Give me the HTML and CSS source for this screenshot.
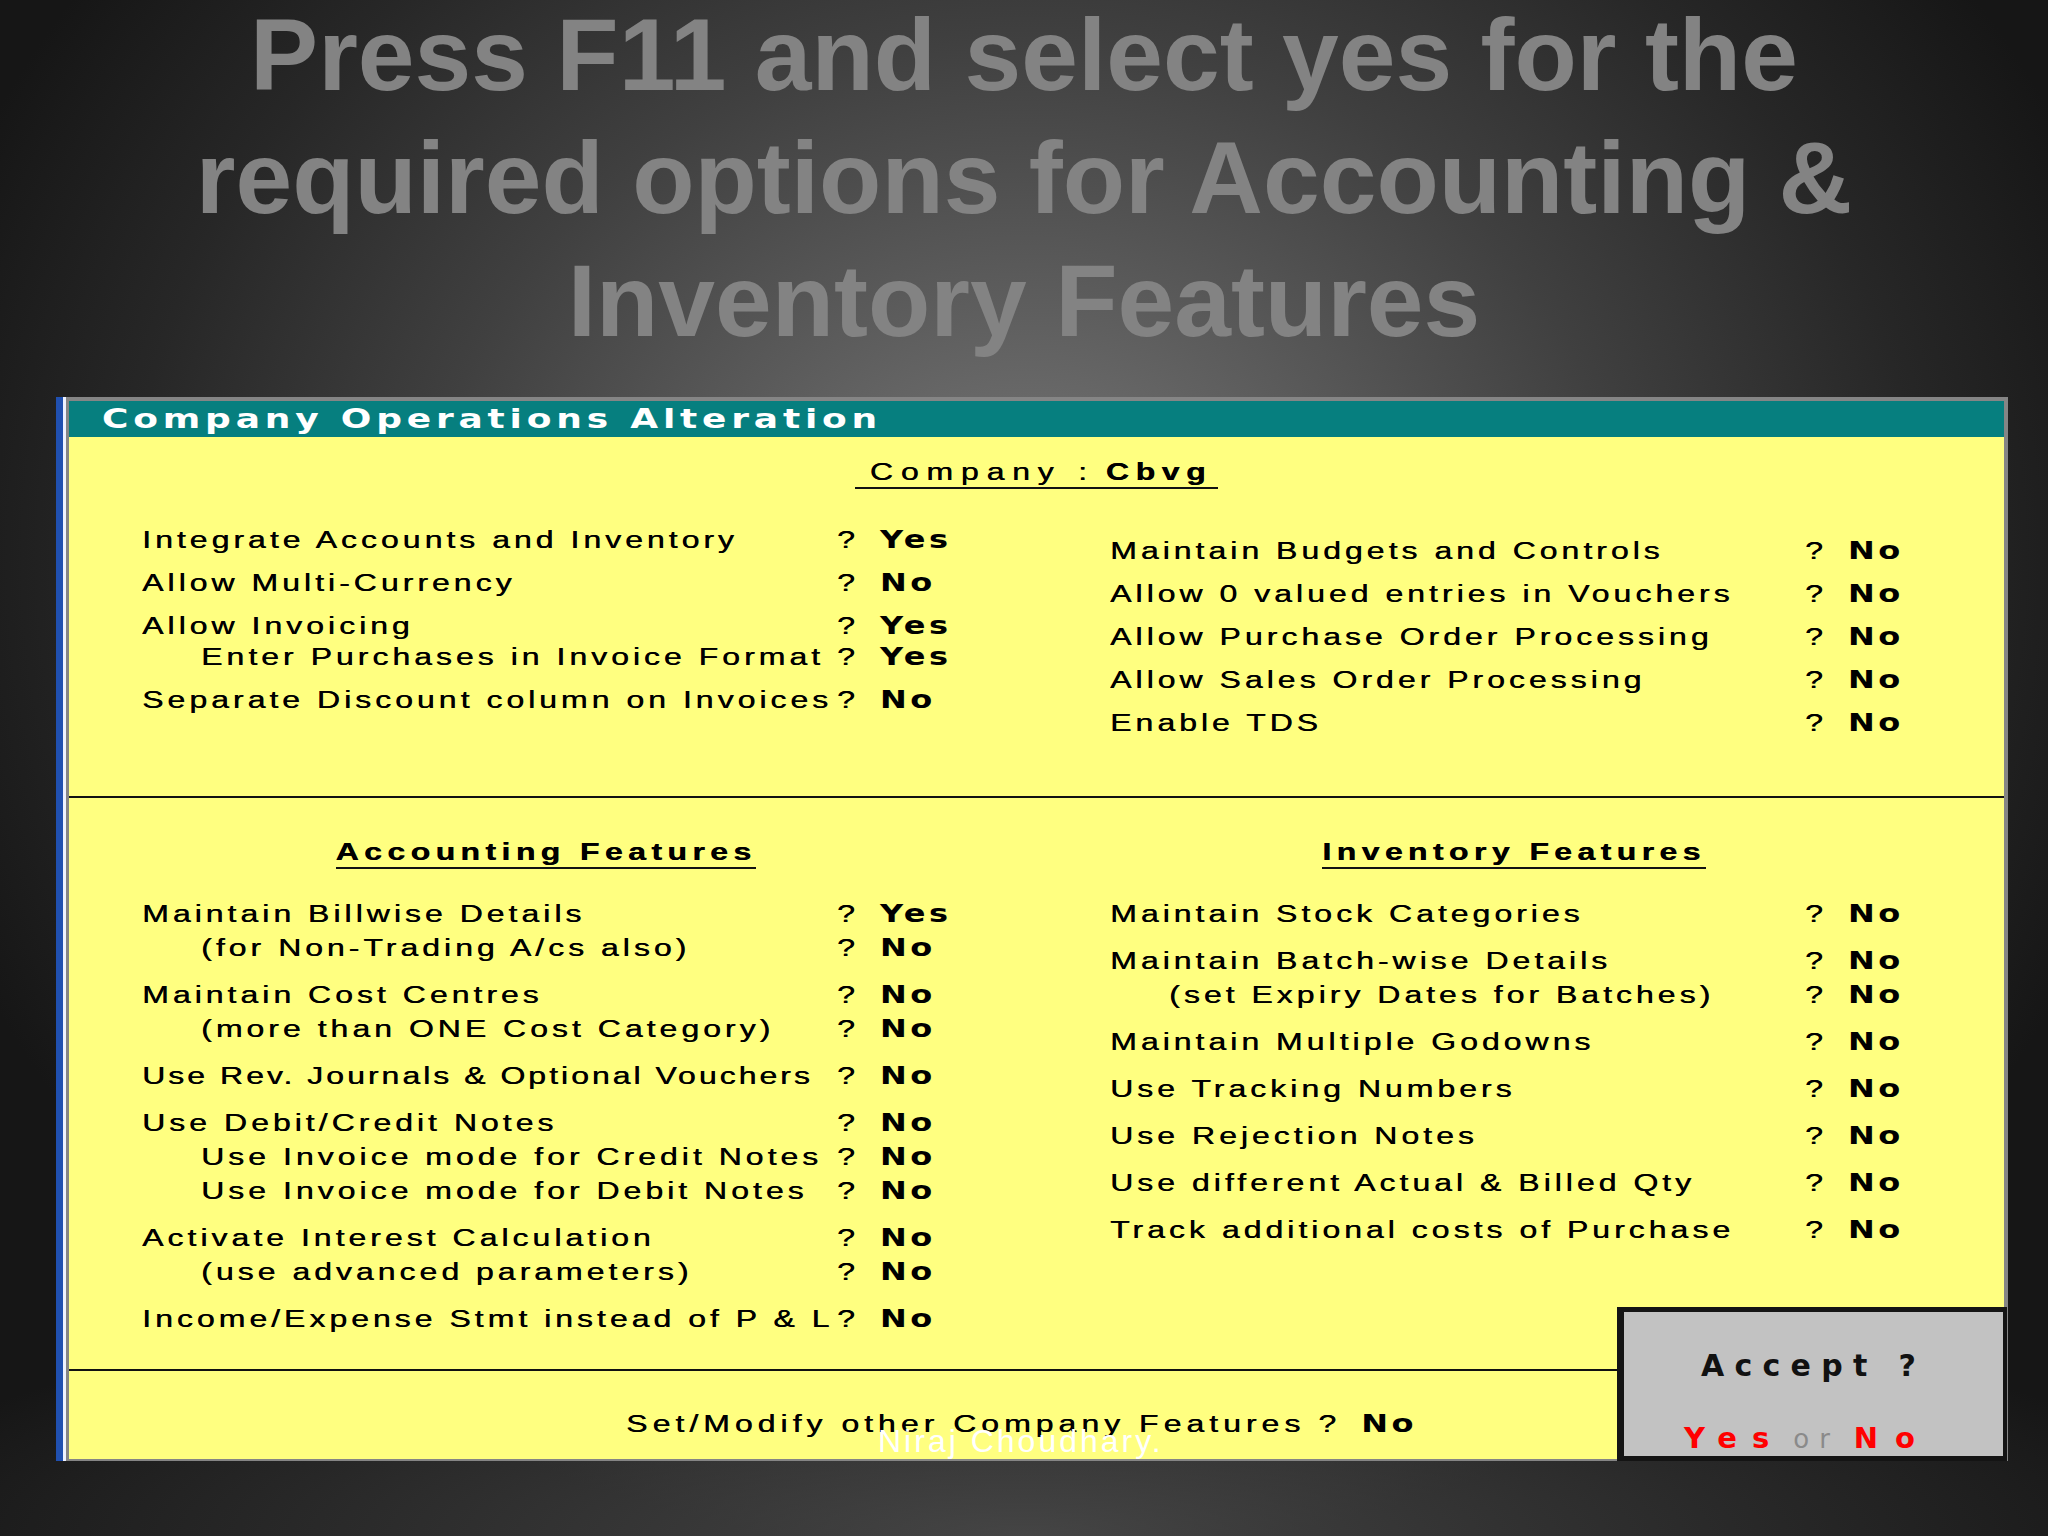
FILE: index.html
```html
<!DOCTYPE html>
<html lang="en">
<head>
    <meta charset="UTF-8">
    <meta name="viewport" content="width=device-width, initial-scale=1.0">
    <title>Company Operations Alteration</title>
    <link rel="stylesheet" href="styles.css">
</head>
<body>

    <h1 class="slide-title">Press F11 and select yes for the<br>required options for Accounting &amp;<br>Inventory Features</h1>

    <div class="window">
        <div class="frame">
            <div class="panel">
                <div class="panel-head"><span class="sq">Company Operations Alteration</span></div>

                <div class="company">
                    <span class="company-line"><span class="sq">Company :</span><b class="sq">Cbvg</b></span>
                </div>

                <!-- General options -->
                <div class="cols top-opts">
                    <div class="opt-list">
                        <div class="grp">
                            <div class="opt"><span class="lbl">Integrate Accounts and Inventory</span><span class="q">?</span><span class="val">Yes</span></div>
                        </div>
                        <div class="grp">
                            <div class="opt"><span class="lbl">Allow Multi-Currency</span><span class="q">?</span><span class="val">No</span></div>
                        </div>
                        <div class="grp">
                            <div class="opt"><span class="lbl">Allow Invoicing</span><span class="q">?</span><span class="val">Yes</span></div>
                            <div class="opt sub"><span class="lbl">Enter Purchases in Invoice Format</span><span class="q">?</span><span class="val">Yes</span></div>
                        </div>
                        <div class="grp">
                            <div class="opt"><span class="lbl">Separate Discount column on Invoices</span><span class="q">?</span><span class="val">No</span></div>
                        </div>
                    </div>

                    <div class="opt-list shift">
                        <div class="grp">
                            <div class="opt"><span class="lbl">Maintain Budgets and Controls</span><span class="q">?</span><span class="val">No</span></div>
                        </div>
                        <div class="grp">
                            <div class="opt"><span class="lbl">Allow 0 valued entries in Vouchers</span><span class="q">?</span><span class="val">No</span></div>
                        </div>
                        <div class="grp">
                            <div class="opt"><span class="lbl">Allow Purchase Order Processing</span><span class="q">?</span><span class="val">No</span></div>
                        </div>
                        <div class="grp">
                            <div class="opt"><span class="lbl">Allow Sales Order Processing</span><span class="q">?</span><span class="val">No</span></div>
                        </div>
                        <div class="grp">
                            <div class="opt"><span class="lbl">Enable TDS</span><span class="q">?</span><span class="val">No</span></div>
                        </div>
                    </div>
                </div>

                <!-- Accounting / Inventory features -->
                <div class="cols features">
                    <div>
                        <div class="feat-title"><span><span class="sq">Accounting Features</span></span></div>
                        <div class="opt-list">
                            <div class="grp">
                                <div class="opt"><span class="lbl">Maintain Billwise Details</span><span class="q">?</span><span class="val">Yes</span></div>
                                <div class="opt sub"><span class="lbl">(for Non-Trading A/cs also)</span><span class="q">?</span><span class="val">No</span></div>
                            </div>
                            <div class="grp">
                                <div class="opt"><span class="lbl">Maintain Cost Centres</span><span class="q">?</span><span class="val">No</span></div>
                                <div class="opt sub"><span class="lbl">(more than ONE Cost Category)</span><span class="q">?</span><span class="val">No</span></div>
                            </div>
                            <div class="grp">
                                <div class="opt"><span class="lbl tight">Use Rev. Journals &amp; Optional Vouchers</span><span class="q">?</span><span class="val">No</span></div>
                            </div>
                            <div class="grp">
                                <div class="opt"><span class="lbl">Use Debit/Credit Notes</span><span class="q">?</span><span class="val">No</span></div>
                                <div class="opt sub"><span class="lbl">Use Invoice mode for Credit Notes</span><span class="q">?</span><span class="val">No</span></div>
                                <div class="opt sub"><span class="lbl">Use Invoice mode for Debit Notes</span><span class="q">?</span><span class="val">No</span></div>
                            </div>
                            <div class="grp">
                                <div class="opt"><span class="lbl">Activate Interest Calculation</span><span class="q">?</span><span class="val">No</span></div>
                                <div class="opt sub"><span class="lbl">(use advanced parameters)</span><span class="q">?</span><span class="val">No</span></div>
                            </div>
                            <div class="grp">
                                <div class="opt"><span class="lbl">Income/Expense Stmt instead of P &amp; L</span><span class="q">?</span><span class="val">No</span></div>
                            </div>
                        </div>
                    </div>

                    <div>
                        <div class="feat-title"><span><span class="sq">Inventory Features</span></span></div>
                        <div class="opt-list">
                            <div class="grp">
                                <div class="opt"><span class="lbl">Maintain Stock Categories</span><span class="q">?</span><span class="val">No</span></div>
                            </div>
                            <div class="grp">
                                <div class="opt"><span class="lbl">Maintain Batch-wise Details</span><span class="q">?</span><span class="val">No</span></div>
                                <div class="opt sub"><span class="lbl">(set Expiry Dates for Batches)</span><span class="q">?</span><span class="val">No</span></div>
                            </div>
                            <div class="grp">
                                <div class="opt"><span class="lbl">Maintain Multiple Godowns</span><span class="q">?</span><span class="val">No</span></div>
                            </div>
                            <div class="grp">
                                <div class="opt"><span class="lbl">Use Tracking Numbers</span><span class="q">?</span><span class="val">No</span></div>
                            </div>
                            <div class="grp">
                                <div class="opt"><span class="lbl">Use Rejection Notes</span><span class="q">?</span><span class="val">No</span></div>
                            </div>
                            <div class="grp">
                                <div class="opt"><span class="lbl">Use different Actual &amp; Billed Qty</span><span class="q">?</span><span class="val">No</span></div>
                            </div>
                            <div class="grp">
                                <div class="opt"><span class="lbl">Track additional costs of Purchase</span><span class="q">?</span><span class="val">No</span></div>
                            </div>
                        </div>
                    </div>
                </div>

                <div class="bottom-bar">
                    <div class="bottom-text">
                        <span>Set/Modify other Company Features</span><span class="q">?</span><span class="val">No</span>
                    </div>
                </div>

                <!-- Accept dialog -->
                <div class="accept">
                    <div class="accept-q">Accept ?</div>
                    <div class="accept-yn"><span class="yes">Yes</span><span class="or">or</span><span class="no">No</span></div>
                </div>
            </div>
        </div>
    </div>

    <div class="watermark">Niraj Choudhary.</div>

</body>
</html>
```

FILE: styles.css
```css
body {
    position: relative;
    margin: 0;
    width: 2048px;
    height: 1536px;
    overflow: hidden;
    font-family: "Liberation Sans", Arial, sans-serif;
    background:
        radial-gradient(ellipse 1200px 260px at 50% 100%, rgba(80, 80, 80, 0.8), rgba(80, 80, 80, 0) 100%),
        radial-gradient(ellipse 1150px 1000px at 50% 560px, #7a7a7a 0%, #5e5e5e 25%, #404040 52%, #272727 78%, #161616 100%);
}

.slide-title {
    margin: -6px 0 0;
    font: bold 102px/123px "Liberation Sans", Arial, sans-serif;
    color: #838383;
    text-align: center;
}

/* the Tally screen text is wide and short: glyphs are squeezed vertically */
.sq {
    display: inline-block;
    transform: scaleY(0.76);
}

.window {
    margin: 34px 0 0 56px;
    width: 1952px;
    box-sizing: border-box;
    border-left: 7px solid #2050b0;
}

.frame {
    border-left: 3px solid #eef2ff;
}

.panel {
    position: relative;
    background-color: #ffff80;
    border: 4px solid #858585;
    border-left-width: 3px;
    border-bottom-width: 2px;
    color: #000;
    font-size: 32px;
    letter-spacing: 4px;
    text-shadow: 0.5px 0 0 #000;
}

.panel-head {
    background-color: #067f7f;
    color: white;
    font: bold 36px/36px "DejaVu Sans", sans-serif;
    letter-spacing: 4.8px;
    padding-left: 33px;
    height: 36px;
    overflow: hidden;
    text-shadow: none;
}

.company {
    display: flex;
    justify-content: center;
    margin-top: 20px;
    line-height: 30px;
    letter-spacing: 7.8px;
}

.company-line {
    border-bottom: 2px solid #111;
    padding: 0 6px 0 15px;
    height: 30px;
}

.company-line b {
    margin-left: 11px;
    letter-spacing: 6.6px;
}

.cols {
    display: grid;
    grid-template-columns: 808px 808px;
    column-gap: 160px;
    padding-left: 73px;
}

.top-opts {
    padding-top: 36px;
    padding-bottom: 57px;
}

.top-opts .opt {
    line-height: 31px;
}

.top-opts .grp + .grp {
    margin-top: 12px;
}

.top-opts .shift {
    margin-top: 11px;
}

.features {
    border-top: 2px solid #111;
    padding-bottom: 33px;
}

.features .opt {
    line-height: 34px;
}

.features .grp + .grp {
    margin-top: 13px;
}

.feat-title {
    display: flex;
    justify-content: center;
    margin: 39px 0 28px;
    font-weight: bold;
    line-height: 30px;
    letter-spacing: 5.4px;
}

.feat-title > span {
    border-bottom: 2px solid #111;
    height: 30px;
}

.opt {
    display: grid;
    grid-template-columns: 695px 43px auto;
    white-space: nowrap;
    transform: scaleY(0.76);
}

.opt.sub .lbl {
    padding-left: 59px;
}

.lbl.tight {
    letter-spacing: 3px;
}

.val {
    font-family: "DejaVu Sans", sans-serif;
    font-weight: bold;
    letter-spacing: 3.5px;
    text-shadow: none;
}

.bottom-bar {
    border-top: 2px solid #111;
    padding: 36px 30px 18px 0;
}

.bottom-text {
    display: flex;
    justify-content: center;
    line-height: 34px;
    letter-spacing: 5px;
    white-space: nowrap;
    transform: scaleY(0.76);
}

.bottom-text .q {
    width: 43px;
    margin-left: 13px;
    letter-spacing: 4px;
}

.accept {
    position: absolute;
    right: -3px;
    bottom: -2px;
    width: 390px;
    height: 154px;
    box-sizing: border-box;
    background-color: #c2c2c2;
    border: 5px solid #141414;
    border-left-width: 7px;
    border-right-width: 4px;
    text-align: center;
    font-family: "DejaVu Sans", sans-serif;
    letter-spacing: 0;
    text-shadow: none;
}

.accept-q {
    margin-top: 36px;
    font-weight: bold;
    font-size: 30px;
    line-height: 36px;
    letter-spacing: 10.3px;
    color: #111;
}

.accept-yn {
    display: flex;
    justify-content: center;
    align-items: baseline;
    margin-top: 36px;
    padding-right: 11px;
    line-height: 36px;
    color: #ff0000;
    font-weight: bold;
    font-size: 29px;
}

.accept-yn .yes {
    letter-spacing: 15px;
}

.accept-yn .or {
    margin: 0 14px 0 9px;
    font-weight: normal;
    font-size: 26px;
    letter-spacing: 10px;
    color: #8a8a8a;
}

.accept-yn .no {
    letter-spacing: 17px;
}

.watermark {
    position: absolute;
    left: 878px;
    top: 1425px;
    font-size: 32px;
    line-height: 1;
    letter-spacing: 3px;
    color: white;
}
```
